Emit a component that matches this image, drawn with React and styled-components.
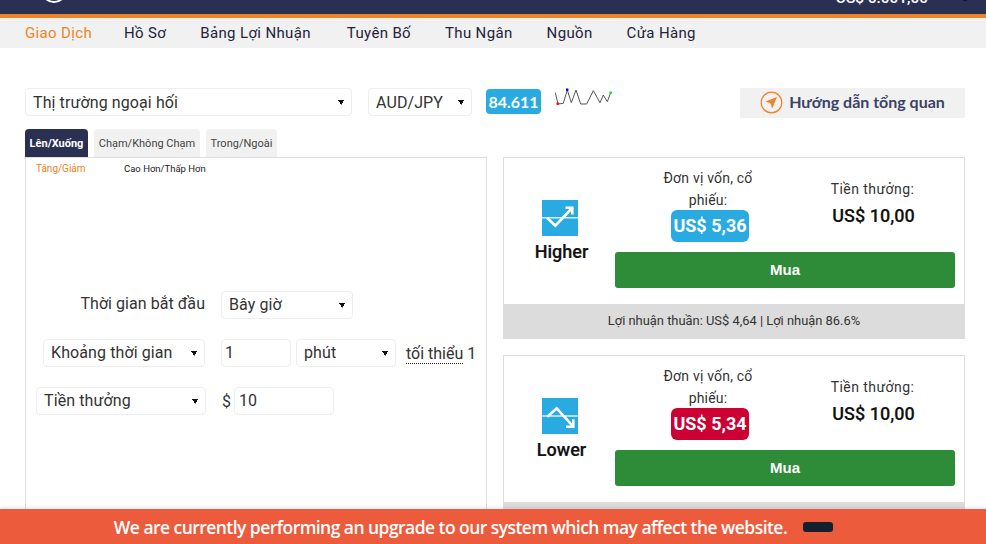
import React from "react";
import styled, { createGlobalStyle } from "styled-components";

const Global = createGlobalStyle`
  html, body { margin: 0; padding: 0; background: #fff; }
  body { font-family: Roboto, "Liberation Sans", sans-serif; color: #333; }
`;
const Page = styled.div`
  position: relative; width: 986px; height: 544px; overflow: hidden;
`;
const TopBar = styled.div`
  height: 14px; background: #2a3052; border-bottom: 4px solid #ef8427;
  display: flex; justify-content: space-between; align-items: flex-start;
  padding: 0 19px 0 41px; overflow: hidden; color: #fff;
`;
const LogoRing = styled.div`
  width: 26px; height: 26px; margin-top: -23px; flex: none;
  border: 2px solid #fff; border-radius: 50%; box-sizing: border-box;
`;
const Account = styled.div`
  display: flex; align-items: flex-start; gap: 35px;
`;
const Balance = styled.div`
  font-size: 15.4px; font-weight: 500; line-height: 16px; margin-top: -10px;
`;
const Caret = styled.div`
  width: 4px; height: 1px; background: #14182e;
`;
const Nav = styled.nav`
  height: 30px; background: #f1f1f1; display: flex; align-items: center;
  padding-left: 25px; font-size: 15px; letter-spacing: .35px;
`;
const NavItem = styled.a`
  margin-right: ${p => p.$gap}px; color: ${p => (p.$active ? "#ef8427" : "#23233a")};
`;
const Content = styled.div`
  padding: 40px 21px 0 25px;
`;
const Toolbar = styled.div`
  display: flex; align-items: flex-start; height: 41px;
`;
const Select = styled.select`
  appearance: none; -webkit-appearance: none;
  height: 28px; width: ${p => p.$w}px; box-sizing: border-box; flex: none;
  margin: 0 0 0 ${p => p.$ml || 0}px; padding: 0 16px 0 7px; outline: none;
  border: 1px solid #eee; border-radius: 4px; color: #333;
  font-family: Roboto, sans-serif; font-size: 16px; letter-spacing: .1px;
  background-color: #fff;
  background-image:
    linear-gradient(to top right, transparent 50%, #111 50%),
    linear-gradient(to top left, transparent 50%, #111 50%);
  background-repeat: no-repeat;
  background-size: 3.5px 5px, 3.5px 5px;
  background-position: right 10px center, right 6.5px center;
`;
const Badge = styled.div`
  height: 25px; width: 55px; margin: 1px 14px 0 14px; background: #29abe2; color: #fff;
  border-radius: 4px; font-size: 16px; font-weight: 700; text-align: center; line-height: 25px;
  font-family: Lato, Roboto, sans-serif;
`;
const Spark = styled.svg`
  width: 60px; height: 24px; margin-top: -2px; margin-left: -2px; flex: none;
`;
const Guide = styled.div`
  margin-left: auto; width: 225px; height: 30px; padding-bottom: 4px; box-sizing: border-box;
  background: #f1f1f1; display: flex; align-items: center; justify-content: center; gap: 6px;
  color: #3c4167; font-family: Lato, sans-serif; font-weight: 700; font-size: 16px;
`;
const GuideIcon = styled.svg`
  width: 23px; height: 23px; margin-top: 2px; flex: none;
`;
const Columns = styled.div`
  display: flex; gap: 16px; align-items: flex-start;
`;
const Left = styled.div` width: 462px; flex: none; `;
const Tabs = styled.div` display: flex; gap: 6px; height: 28px; `;
const Tab = styled.div`
  border-radius: 4px 4px 0 0; line-height: 29px; font-size: 11px; white-space: nowrap;
  background: ${p => (p.$active ? "#2a3052" : "#f1f1f1")};
  color: ${p => (p.$active ? "#fff" : "#444")};
  font-weight: ${p => (p.$active ? 700 : 400)};
  width: ${p => p.$w}px; text-align: center; box-sizing: border-box;
`;
const Panel = styled.div`
  border: 1px solid #ddd; height: 420px; box-sizing: border-box;
`;
const SubTabs = styled.div`
  display: flex; padding: 5px 0 0 10px; line-height: 12px; height: 133px; box-sizing: border-box;
`;
const SubTab = styled.div`
  width: ${p => p.$w}px; font-size: ${p => p.$fs}px; white-space: nowrap;
  color: ${p => (p.$active ? "#ef7f1a" : "#222")};
`;
const Field = styled.input`
  height: 28px; width: ${p => p.$w}px; box-sizing: border-box; border: 1px solid #eee; border-radius: 4px;
  padding: 0 3px 0 ${p => p.$pl}px; font: 16px Roboto, sans-serif; color: #333; margin-right: ${p => p.$mr || 0}px; outline: none; flex: none;
`;
const Row = styled.div`
  display: flex; align-items: center; height: 28px; margin-bottom: 20px; font-size: 16px; color: #333;
  ${Select}, ${Field} { padding-bottom: 2px; }
`;
const Lead = styled.div`
  width: 180px; flex: none; display: flex; justify-content: flex-end; margin-right: 15px;
  padding-right: ${p => p.$pr || 0}px; box-sizing: border-box;
`;
const LabelText = styled.label`
  font-size: 16px; color: #333; position: relative; top: -2px; letter-spacing: .05px;
`;
const Hint = styled.span`
  margin-left: 10px; white-space: nowrap;
  & > u { text-decoration: none; border-bottom: 1px dotted #222; }
`;
const Dollar = styled.span` margin: 0 3px 0 1px; `;
const Right = styled.div`
  width: 462px; flex: none; display: flex; flex-direction: column; gap: 16px; padding-top: 28px;
`;
const Card = styled.div` border: 1px solid #ddd; border-bottom: 0; `;
const CardBody = styled.div`
  height: 146px; display: flex; box-sizing: border-box;
`;
const Kind = styled.div`
  width: 111px; flex: none; display: flex; flex-direction: column; align-items: center; padding-top: 42px; box-sizing: border-box;
  & > svg { display: block; }
`;
const KindName = styled.div`
  font-size: 18px; font-weight: 500; color: #111; line-height: 22px; margin: 5px 0 0 4px; -webkit-text-stroke: .2px #111;
`;
const Main = styled.div`
  width: 340px; flex: none; padding-top: 9px; display: flex; flex-direction: column;
`;
const Quotes = styled.div` display: flex; height: 85px; `;
const Quote = styled.div`
  width: ${p => p.$w}px; flex: none; display: flex; flex-direction: column; align-items: center; text-align: center;
  font-size: 14px; line-height: 22px; color: #333; padding-top: ${p => p.$pt || 0}px; box-sizing: border-box;
`;
const QuoteLabel = styled.div`
  width: 110px; letter-spacing: ${p => p.$ls}px; margin-right: ${p => p.$mr || 0}px;
`;
const Price = styled.div`
  width: 78px; height: 32px; margin: -1px 0 0 4px; background: ${p => p.$bg}; color: #fff; border-radius: 6px;
  font-size: 18px; font-weight: 700; line-height: 32px;
`;
const Payout = styled.div` font-size: 18px; font-weight: 500; color: #111; line-height: 22px; margin-top: 5px; -webkit-text-stroke: .15px #111; `;
const Buy = styled.button`
  width: 340px; height: 36px; border: 0; border-radius: 3px; background: #2e8b38; color: #fff;
  font: 700 15px "Liberation Sans", sans-serif; padding: 0 0 2px; flex: none;
`;
const CardFoot = styled.div`
  height: 35px; background: #dcdcdc; margin: 0 -1px; font-size: 12.9px; color: #333; text-align: center; line-height: 34px;
`;
const Banner = styled.div`
  position: absolute; left: 0; right: 0; bottom: 0; height: 35px; background: #ec5b3c; color: #fff;
  box-shadow: 0 -2px 3px rgba(0,0,0,.08);
  display: flex; align-items: center; justify-content: center; gap: 16px; padding-right: 39px;
  font-family: "Open Sans", sans-serif; font-size: 17.5px; font-weight: 600; letter-spacing: -.55px;
`;
const BannerBtn = styled.div`
  width: 30px; height: 10px; background: #14202e; border-radius: 3px; margin-top: 1px;
`;

const Higher = () => (
  <svg width="36" height="36" viewBox="0 0 36 36">
    <rect width="36" height="36" fill="#29abe2" />
    <path d="M0 17.7H36" stroke="#d8f0fb" strokeWidth="1.4" />
    <path d="M5 17.7 13.3 25.7 29.3 9" fill="none" stroke="#fff" strokeWidth="2.6" />
    <path d="M23.5 7.7H30.3V14.5" fill="none" stroke="#fff" strokeWidth="2.6" />
  </svg>
);
const Lower = () => (
  <svg width="36" height="36" viewBox="0 0 36 36">
    <rect width="36" height="36" fill="#29abe2" />
    <path d="M0 18H36" stroke="#d8f0fb" strokeWidth="1.4" />
    <path d="M5.3 18.7 14.7 10.3 30.7 28" fill="none" stroke="#fff" strokeWidth="2.6" />
    <path d="M24 28.7H31.3V21.3" fill="none" stroke="#fff" strokeWidth="2.6" />
  </svg>
);

const TradeCard = ({ icon, name, price, color }) => (
  <Card>
    <CardBody>
      <Kind>{icon}<KindName>{name}</KindName></Kind>
      <Main>
        <Quotes>
          <Quote $w={186}>
            <QuoteLabel $ls={0.2}>Đơn vị vốn, cổ phiếu:</QuoteLabel>
            <Price $bg={color}>{price}</Price>
          </Quote>
          <Quote $w={145} $pt={11}>
            <QuoteLabel $ls={0.45} $mr={2}>Tiền thưởng:</QuoteLabel>
            <Payout>US$ 10,00</Payout>
          </Quote>
        </Quotes>
        <Buy>Mua</Buy>
      </Main>
    </CardBody>
    <CardFoot>Lợi nhuận thuần: US$ 4,64 | Lợi nhuận 86.6%</CardFoot>
  </Card>
);

export default function App() {
  return (
    <Page>
      <Global />
      <TopBar>
        <LogoRing />
        <Account>
          <Balance>US$ 6.001,00</Balance>
          <Caret />
        </Account>
      </TopBar>
      <Nav>
        <NavItem $active $gap={32}>Giao Dịch</NavItem>
        <NavItem $gap={34}>Hồ Sơ</NavItem>
        <NavItem $gap={36}>Bảng Lợi Nhuận</NavItem>
        <NavItem $gap={34}>Tuyên Bố</NavItem>
        <NavItem $gap={34}>Thu Ngân</NavItem>
        <NavItem $gap={34}>Nguồn</NavItem>
        <NavItem $gap={0}>Cửa Hàng</NavItem>
      </Nav>
      <Content>
        <Toolbar>
          <Select $w={327}><option>Thị trường ngoại hối</option></Select>
          <Select $w={104} $ml={16}><option>AUD/JPY</option></Select>
          <Badge>84.611</Badge>
          <Spark viewBox="0 0 60 24">
            <polyline points="2.3,6.7 5,18 10.3,17.3 14.3,4 18.3,16.7 23,4 27.7,18 33.7,18 40.3,4.7 47,16.7 50.3,9 54.3,15.7 57.7,6.7" fill="none" stroke="#555" strokeWidth="1" />
            <rect x="3.5" y="16.5" width="2.4" height="2.4" fill="#f00" />
            <rect x="13" y="2.5" width="2.4" height="2.4" fill="#00c" />
            <rect x="56.5" y="5.5" width="2.4" height="2.4" fill="#0e0" />
          </Spark>
          <Guide>
            <GuideIcon viewBox="0 0 23 23">
              <circle cx="11.5" cy="11.5" r="10.3" fill="none" stroke="#ef8427" strokeWidth="1.2" />
              <path d="M17 6 5.5 10.5 10.5 12.2 12.2 17.5Z" fill="#ef8427" />
            </GuideIcon>
            Hướng dẫn tổng quan
          </Guide>
        </Toolbar>
        <Columns>
          <Left>
            <Tabs>
              <Tab $active $w={63}>Lên/Xuống</Tab>
              <Tab $w={106}>Chạm/Không Chạm</Tab>
              <Tab $w={71}>Trong/Ngoài</Tab>
            </Tabs>
            <Panel>
              <SubTabs>
                <SubTab $active $w={88} $fs={10}>Tăng/Giảm</SubTab>
                <SubTab $fs={9.5}>Cao Hơn/Thấp Hơn</SubTab>
              </SubTabs>
              <Row>
                <Lead $pr={1}><LabelText>Thời gian bắt đầu</LabelText></Lead>
                <Select $w={132}><option>Bây giờ</option></Select>
              </Row>
              <Row>
                <Lead $pr={1}><Select $w={162}><option>Khoảng thời gian</option></Select></Lead>
                <Field $w={70} $mr={5} $pl={3} defaultValue="1" />
                <Select $w={100}><option>phút</option></Select>
                <Hint><u>tối thiểu</u> 1</Hint>
              </Row>
              <Row>
                <Lead><Select $w={170}><option>Tiền thưởng</option></Select></Lead>
                <Dollar>$</Dollar>
                <Field $w={100} $pl={4} defaultValue="10" />
              </Row>
            </Panel>
          </Left>
          <Right>
            <TradeCard icon={<Higher />} name="Higher" price="US$ 5,36" color="#29abe2" />
            <TradeCard icon={<Lower />} name="Lower" price="US$ 5,34" color="#cc0033" />
          </Right>
        </Columns>
      </Content>
      <Banner>
        We are currently performing an upgrade to our system which may affect the website.
        <BannerBtn />
      </Banner>
    </Page>
  );
}
